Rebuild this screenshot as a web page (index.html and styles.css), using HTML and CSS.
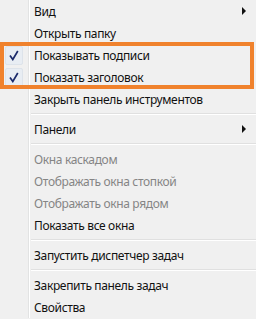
FILE: index.html
```html
<!DOCTYPE html>
<html lang="ru">
<head>
  <meta charset="UTF-8">
  <title>Меню панели задач</title>
  <link rel="stylesheet" href="styles.css">
</head>
<body>
  <div class="menu">
    <div class="item">
      <div class="gutter"></div>
      <span class="label">Вид</span>
      <span class="arrow"></span>
    </div>
    <div class="item">
      <div class="gutter"></div>
      <span class="label">Открыть папку</span>
    </div>

    <div class="highlight">
      <div class="item">
        <div class="gutter"><span class="check"><svg width="10" height="11" viewBox="0 0 10 11"><path d="M1 5.5 L3.8 9.5 L8.8 1" fill="none" stroke="#1b2a6b" stroke-width="1.7"/></svg></span></div>
        <span class="label">Показывать подписи</span>
      </div>
      <div class="item">
        <div class="gutter"><span class="check"><svg width="10" height="11" viewBox="0 0 10 11"><path d="M1 5.5 L3.8 9.5 L8.8 1" fill="none" stroke="#1b2a6b" stroke-width="1.7"/></svg></span></div>
        <span class="label">Показать заголовок</span>
      </div>
    </div>

    <div class="item">
      <div class="gutter"></div>
      <span class="label">Закрыть панель инструментов</span>
    </div>
    <div class="sep"><div class="gutter"></div><div class="line"></div></div>
    <div class="item">
      <div class="gutter"></div>
      <span class="label">Панели</span>
      <span class="arrow"></span>
    </div>
    <div class="sep"><div class="gutter"></div><div class="line"></div></div>
    <div class="item disabled">
      <div class="gutter"></div>
      <span class="label">Окна каскадом</span>
    </div>
    <div class="item disabled">
      <div class="gutter"></div>
      <span class="label">Отображать окна стопкой</span>
    </div>
    <div class="item disabled">
      <div class="gutter"></div>
      <span class="label">Отображать окна рядом</span>
    </div>
    <div class="item">
      <div class="gutter"></div>
      <span class="label">Показать все окна</span>
    </div>
    <div class="sep"><div class="gutter"></div><div class="line"></div></div>
    <div class="item">
      <div class="gutter"></div>
      <span class="label">Запустить диспетчер задач</span>
    </div>
    <div class="sep"><div class="gutter"></div><div class="line"></div></div>
    <div class="item">
      <div class="gutter"></div>
      <span class="label">Закрепить панель задач</span>
    </div>
    <div class="item">
      <div class="gutter"></div>
      <span class="label">Свойства</span>
    </div>
  </div>
</body>
</html>
```

FILE: styles.css
```css
* { box-sizing: border-box; }
body {
  margin: 0;
  background: #f0f0f0;
  font-family: "Noto Sans", "Open Sans", sans-serif;
  font-size: 12px;
  letter-spacing: -0.35px;
  color: #111;
}
.menu {
  width: 256px;
  height: 319px;
  background: #f0f0f0;
}
.item {
  display: flex;
  align-items: center;
  height: 22px;
}
.gutter {
  width: 29px;
  height: 100%;
  flex-shrink: 0;
  border-right: 1px solid #e2e3e3;
  box-shadow: 1px 0 0 #ffffff;
  display: flex;
  align-items: center;
  justify-content: flex-start;
}
.label {
  flex: 1;
  padding-left: 5px;
  white-space: nowrap;
}
.disabled .label {
  color: #858585;
}
.arrow {
  width: 0;
  height: 0;
  margin-right: 10px;
  border-top: 4px solid transparent;
  border-bottom: 4px solid transparent;
  border-left: 4px solid #111;
}
.sep {
  display: flex;
  height: 8px;
}
.sep .line {
  flex: 1;
  margin-left: 2px;
  align-self: center;
  border-top: 1px solid #e0e0e0;
  border-bottom: 1px solid #ffffff;
}
.check {
  width: 18px;
  height: 19px;
  margin-left: 5px;
  display: flex;
  align-items: center;
  justify-content: center;
  background: #e8edf3;
  border: 1px solid #dde3ea;
  border-radius: 2px;
}
.highlight {
  position: relative;
}
.highlight::after {
  content: "";
  position: absolute;
  top: -2px;
  bottom: -1px;
  left: 0;
  right: 2px;
  border: 4px solid #f0822d;
  pointer-events: none;
}
```
